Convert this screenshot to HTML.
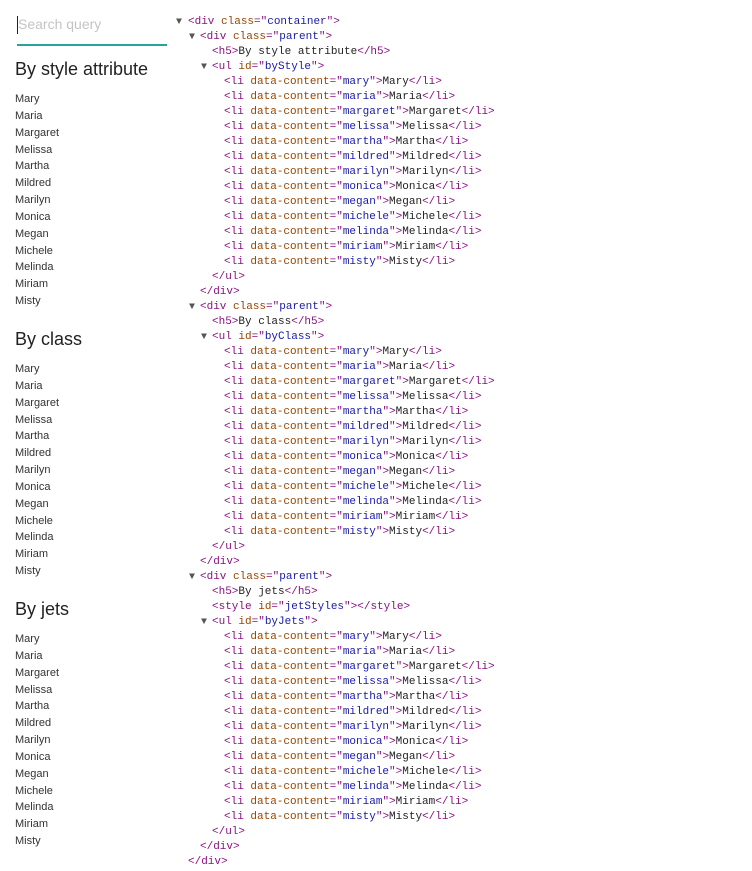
<!DOCTYPE html>
<html><head><meta charset="utf-8"><style>
body{margin:0;background:#fff;width:752px;height:871px;overflow:hidden;position:relative;font-family:"Liberation Sans",sans-serif}
.search{position:absolute;left:17px;top:14px;width:150px;height:30px;border-bottom:2px solid #26a69a}
.search span{position:absolute;left:1px;top:2px;font-size:14px;color:#c4c4c4}
.search i{position:absolute;left:0;top:2px;width:1px;height:18px;background:#222}
.sec{position:absolute;left:15px}
.sec h5{margin:0;font-size:18px;font-weight:normal;color:#222;height:24px;line-height:24px}
.sec ul{list-style:none;margin:0;padding:0;margin-top:10px}
.sec li{font-size:11px;color:#333;height:16.85px;line-height:16.85px}
.code{position:absolute;left:0;top:15px;font-family:"Liberation Mono",monospace;font-size:11px;line-height:15px;color:#222}
.l{position:relative;height:15px;white-space:pre}
.t{color:#881280}.a{color:#994500}.v{color:#1a1aa6}
.tri{position:absolute;font-size:10px;color:#555;top:0}
</style></head><body>
<div class="search"><i></i><span>Search query</span></div>

<div class="sec" style="top:57px"><h5>By style attribute</h5><ul><li>Mary</li><li>Maria</li><li>Margaret</li><li>Melissa</li><li>Martha</li><li>Mildred</li><li>Marilyn</li><li>Monica</li><li>Megan</li><li>Michele</li><li>Melinda</li><li>Miriam</li><li>Misty</li></ul></div>
<div class="sec" style="top:327px"><h5>By class</h5><ul><li>Mary</li><li>Maria</li><li>Margaret</li><li>Melissa</li><li>Martha</li><li>Mildred</li><li>Marilyn</li><li>Monica</li><li>Megan</li><li>Michele</li><li>Melinda</li><li>Miriam</li><li>Misty</li></ul></div>
<div class="sec" style="top:597px"><h5>By jets</h5><ul><li>Mary</li><li>Maria</li><li>Margaret</li><li>Melissa</li><li>Martha</li><li>Mildred</li><li>Marilyn</li><li>Monica</li><li>Megan</li><li>Michele</li><li>Melinda</li><li>Miriam</li><li>Misty</li></ul></div>

<div class="code">
<div class="l" style="padding-left:188px"><span class="tri" style="left:176px">▼</span><span class="t">&lt;div </span><span class="a">class</span><span class="t">="</span><span class="v">container</span><span class="t">"&gt;</span></div>
<div class="l" style="padding-left:200px"><span class="tri" style="left:189px">▼</span><span class="t">&lt;div </span><span class="a">class</span><span class="t">="</span><span class="v">parent</span><span class="t">"&gt;</span></div>
<div class="l" style="padding-left:212px"><span class="t">&lt;h5&gt;</span>By style attribute<span class="t">&lt;/h5&gt;</span></div>
<div class="l" style="padding-left:212px"><span class="tri" style="left:201px">▼</span><span class="t">&lt;ul </span><span class="a">id</span><span class="t">="</span><span class="v">byStyle</span><span class="t">"&gt;</span></div>
<div class="l" style="padding-left:224px"><span class="t">&lt;li </span><span class="a">data-content</span><span class="t">="</span><span class="v">mary</span><span class="t">"&gt;</span>Mary<span class="t">&lt;/li&gt;</span></div>
<div class="l" style="padding-left:224px"><span class="t">&lt;li </span><span class="a">data-content</span><span class="t">="</span><span class="v">maria</span><span class="t">"&gt;</span>Maria<span class="t">&lt;/li&gt;</span></div>
<div class="l" style="padding-left:224px"><span class="t">&lt;li </span><span class="a">data-content</span><span class="t">="</span><span class="v">margaret</span><span class="t">"&gt;</span>Margaret<span class="t">&lt;/li&gt;</span></div>
<div class="l" style="padding-left:224px"><span class="t">&lt;li </span><span class="a">data-content</span><span class="t">="</span><span class="v">melissa</span><span class="t">"&gt;</span>Melissa<span class="t">&lt;/li&gt;</span></div>
<div class="l" style="padding-left:224px"><span class="t">&lt;li </span><span class="a">data-content</span><span class="t">="</span><span class="v">martha</span><span class="t">"&gt;</span>Martha<span class="t">&lt;/li&gt;</span></div>
<div class="l" style="padding-left:224px"><span class="t">&lt;li </span><span class="a">data-content</span><span class="t">="</span><span class="v">mildred</span><span class="t">"&gt;</span>Mildred<span class="t">&lt;/li&gt;</span></div>
<div class="l" style="padding-left:224px"><span class="t">&lt;li </span><span class="a">data-content</span><span class="t">="</span><span class="v">marilyn</span><span class="t">"&gt;</span>Marilyn<span class="t">&lt;/li&gt;</span></div>
<div class="l" style="padding-left:224px"><span class="t">&lt;li </span><span class="a">data-content</span><span class="t">="</span><span class="v">monica</span><span class="t">"&gt;</span>Monica<span class="t">&lt;/li&gt;</span></div>
<div class="l" style="padding-left:224px"><span class="t">&lt;li </span><span class="a">data-content</span><span class="t">="</span><span class="v">megan</span><span class="t">"&gt;</span>Megan<span class="t">&lt;/li&gt;</span></div>
<div class="l" style="padding-left:224px"><span class="t">&lt;li </span><span class="a">data-content</span><span class="t">="</span><span class="v">michele</span><span class="t">"&gt;</span>Michele<span class="t">&lt;/li&gt;</span></div>
<div class="l" style="padding-left:224px"><span class="t">&lt;li </span><span class="a">data-content</span><span class="t">="</span><span class="v">melinda</span><span class="t">"&gt;</span>Melinda<span class="t">&lt;/li&gt;</span></div>
<div class="l" style="padding-left:224px"><span class="t">&lt;li </span><span class="a">data-content</span><span class="t">="</span><span class="v">miriam</span><span class="t">"&gt;</span>Miriam<span class="t">&lt;/li&gt;</span></div>
<div class="l" style="padding-left:224px"><span class="t">&lt;li </span><span class="a">data-content</span><span class="t">="</span><span class="v">misty</span><span class="t">"&gt;</span>Misty<span class="t">&lt;/li&gt;</span></div>
<div class="l" style="padding-left:212px"><span class="t">&lt;/ul&gt;</span></div>
<div class="l" style="padding-left:200px"><span class="t">&lt;/div&gt;</span></div>
<div class="l" style="padding-left:200px"><span class="tri" style="left:189px">▼</span><span class="t">&lt;div </span><span class="a">class</span><span class="t">="</span><span class="v">parent</span><span class="t">"&gt;</span></div>
<div class="l" style="padding-left:212px"><span class="t">&lt;h5&gt;</span>By class<span class="t">&lt;/h5&gt;</span></div>
<div class="l" style="padding-left:212px"><span class="tri" style="left:201px">▼</span><span class="t">&lt;ul </span><span class="a">id</span><span class="t">="</span><span class="v">byClass</span><span class="t">"&gt;</span></div>
<div class="l" style="padding-left:224px"><span class="t">&lt;li </span><span class="a">data-content</span><span class="t">="</span><span class="v">mary</span><span class="t">"&gt;</span>Mary<span class="t">&lt;/li&gt;</span></div>
<div class="l" style="padding-left:224px"><span class="t">&lt;li </span><span class="a">data-content</span><span class="t">="</span><span class="v">maria</span><span class="t">"&gt;</span>Maria<span class="t">&lt;/li&gt;</span></div>
<div class="l" style="padding-left:224px"><span class="t">&lt;li </span><span class="a">data-content</span><span class="t">="</span><span class="v">margaret</span><span class="t">"&gt;</span>Margaret<span class="t">&lt;/li&gt;</span></div>
<div class="l" style="padding-left:224px"><span class="t">&lt;li </span><span class="a">data-content</span><span class="t">="</span><span class="v">melissa</span><span class="t">"&gt;</span>Melissa<span class="t">&lt;/li&gt;</span></div>
<div class="l" style="padding-left:224px"><span class="t">&lt;li </span><span class="a">data-content</span><span class="t">="</span><span class="v">martha</span><span class="t">"&gt;</span>Martha<span class="t">&lt;/li&gt;</span></div>
<div class="l" style="padding-left:224px"><span class="t">&lt;li </span><span class="a">data-content</span><span class="t">="</span><span class="v">mildred</span><span class="t">"&gt;</span>Mildred<span class="t">&lt;/li&gt;</span></div>
<div class="l" style="padding-left:224px"><span class="t">&lt;li </span><span class="a">data-content</span><span class="t">="</span><span class="v">marilyn</span><span class="t">"&gt;</span>Marilyn<span class="t">&lt;/li&gt;</span></div>
<div class="l" style="padding-left:224px"><span class="t">&lt;li </span><span class="a">data-content</span><span class="t">="</span><span class="v">monica</span><span class="t">"&gt;</span>Monica<span class="t">&lt;/li&gt;</span></div>
<div class="l" style="padding-left:224px"><span class="t">&lt;li </span><span class="a">data-content</span><span class="t">="</span><span class="v">megan</span><span class="t">"&gt;</span>Megan<span class="t">&lt;/li&gt;</span></div>
<div class="l" style="padding-left:224px"><span class="t">&lt;li </span><span class="a">data-content</span><span class="t">="</span><span class="v">michele</span><span class="t">"&gt;</span>Michele<span class="t">&lt;/li&gt;</span></div>
<div class="l" style="padding-left:224px"><span class="t">&lt;li </span><span class="a">data-content</span><span class="t">="</span><span class="v">melinda</span><span class="t">"&gt;</span>Melinda<span class="t">&lt;/li&gt;</span></div>
<div class="l" style="padding-left:224px"><span class="t">&lt;li </span><span class="a">data-content</span><span class="t">="</span><span class="v">miriam</span><span class="t">"&gt;</span>Miriam<span class="t">&lt;/li&gt;</span></div>
<div class="l" style="padding-left:224px"><span class="t">&lt;li </span><span class="a">data-content</span><span class="t">="</span><span class="v">misty</span><span class="t">"&gt;</span>Misty<span class="t">&lt;/li&gt;</span></div>
<div class="l" style="padding-left:212px"><span class="t">&lt;/ul&gt;</span></div>
<div class="l" style="padding-left:200px"><span class="t">&lt;/div&gt;</span></div>
<div class="l" style="padding-left:200px"><span class="tri" style="left:189px">▼</span><span class="t">&lt;div </span><span class="a">class</span><span class="t">="</span><span class="v">parent</span><span class="t">"&gt;</span></div>
<div class="l" style="padding-left:212px"><span class="t">&lt;h5&gt;</span>By jets<span class="t">&lt;/h5&gt;</span></div>
<div class="l" style="padding-left:212px"><span class="t">&lt;style </span><span class="a">id</span><span class="t">="</span><span class="v">jetStyles</span><span class="t">"&gt;&lt;/style&gt;</span></div>
<div class="l" style="padding-left:212px"><span class="tri" style="left:201px">▼</span><span class="t">&lt;ul </span><span class="a">id</span><span class="t">="</span><span class="v">byJets</span><span class="t">"&gt;</span></div>
<div class="l" style="padding-left:224px"><span class="t">&lt;li </span><span class="a">data-content</span><span class="t">="</span><span class="v">mary</span><span class="t">"&gt;</span>Mary<span class="t">&lt;/li&gt;</span></div>
<div class="l" style="padding-left:224px"><span class="t">&lt;li </span><span class="a">data-content</span><span class="t">="</span><span class="v">maria</span><span class="t">"&gt;</span>Maria<span class="t">&lt;/li&gt;</span></div>
<div class="l" style="padding-left:224px"><span class="t">&lt;li </span><span class="a">data-content</span><span class="t">="</span><span class="v">margaret</span><span class="t">"&gt;</span>Margaret<span class="t">&lt;/li&gt;</span></div>
<div class="l" style="padding-left:224px"><span class="t">&lt;li </span><span class="a">data-content</span><span class="t">="</span><span class="v">melissa</span><span class="t">"&gt;</span>Melissa<span class="t">&lt;/li&gt;</span></div>
<div class="l" style="padding-left:224px"><span class="t">&lt;li </span><span class="a">data-content</span><span class="t">="</span><span class="v">martha</span><span class="t">"&gt;</span>Martha<span class="t">&lt;/li&gt;</span></div>
<div class="l" style="padding-left:224px"><span class="t">&lt;li </span><span class="a">data-content</span><span class="t">="</span><span class="v">mildred</span><span class="t">"&gt;</span>Mildred<span class="t">&lt;/li&gt;</span></div>
<div class="l" style="padding-left:224px"><span class="t">&lt;li </span><span class="a">data-content</span><span class="t">="</span><span class="v">marilyn</span><span class="t">"&gt;</span>Marilyn<span class="t">&lt;/li&gt;</span></div>
<div class="l" style="padding-left:224px"><span class="t">&lt;li </span><span class="a">data-content</span><span class="t">="</span><span class="v">monica</span><span class="t">"&gt;</span>Monica<span class="t">&lt;/li&gt;</span></div>
<div class="l" style="padding-left:224px"><span class="t">&lt;li </span><span class="a">data-content</span><span class="t">="</span><span class="v">megan</span><span class="t">"&gt;</span>Megan<span class="t">&lt;/li&gt;</span></div>
<div class="l" style="padding-left:224px"><span class="t">&lt;li </span><span class="a">data-content</span><span class="t">="</span><span class="v">michele</span><span class="t">"&gt;</span>Michele<span class="t">&lt;/li&gt;</span></div>
<div class="l" style="padding-left:224px"><span class="t">&lt;li </span><span class="a">data-content</span><span class="t">="</span><span class="v">melinda</span><span class="t">"&gt;</span>Melinda<span class="t">&lt;/li&gt;</span></div>
<div class="l" style="padding-left:224px"><span class="t">&lt;li </span><span class="a">data-content</span><span class="t">="</span><span class="v">miriam</span><span class="t">"&gt;</span>Miriam<span class="t">&lt;/li&gt;</span></div>
<div class="l" style="padding-left:224px"><span class="t">&lt;li </span><span class="a">data-content</span><span class="t">="</span><span class="v">misty</span><span class="t">"&gt;</span>Misty<span class="t">&lt;/li&gt;</span></div>
<div class="l" style="padding-left:212px"><span class="t">&lt;/ul&gt;</span></div>
<div class="l" style="padding-left:200px"><span class="t">&lt;/div&gt;</span></div>
<div class="l" style="padding-left:188px"><span class="t">&lt;/div&gt;</span></div>
</div>
</body></html>
